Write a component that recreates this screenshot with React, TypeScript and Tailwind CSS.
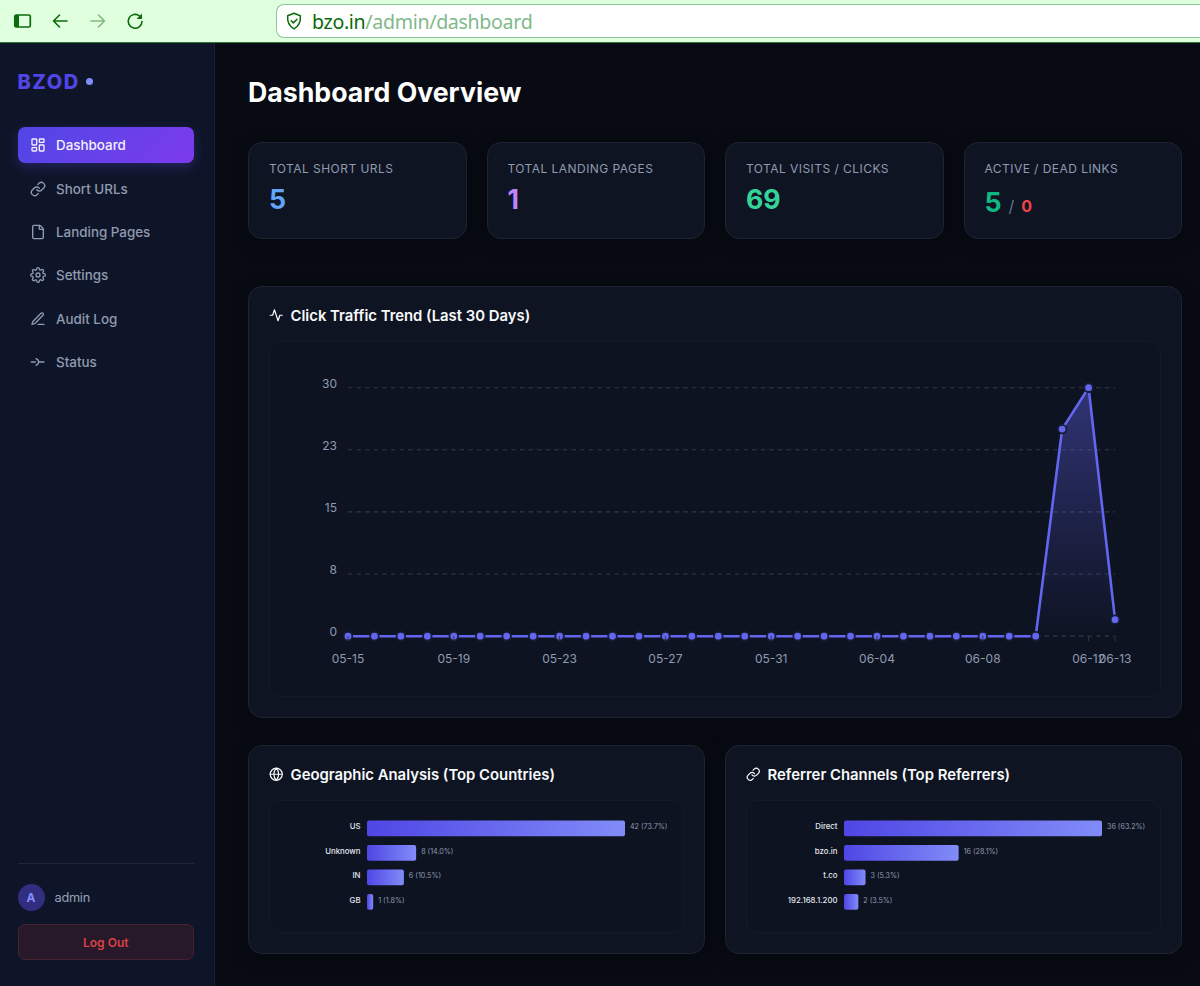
import React from 'react';
import { LayoutDashboard, Link, File } from 'lucide-react';
import { FiActivity, FiEdit3, FiGlobe, FiSettings } from 'react-icons/fi';
import { clsx } from 'clsx';

interface NavItem {
  id: string;
  label: string;
  icon: React.ElementType;
}

interface BarDatum {
  label: string;
  count: number;
  share: string;
}

const StatusIcon: React.FC<{ className?: string }> = ({ className }) => (
  <svg
    viewBox="0 0 24 24"
    fill="none"
    stroke="currentColor"
    strokeWidth="2"
    strokeLinecap="round"
    strokeLinejoin="round"
    className={className}
  >
    <path d="M2 12h6M13 12h8M9 7c2.500 1 4 3 4 5s-1.500 4-4 5" />
  </svg>
);

const navItems: NavItem[] = [
  { id: 'dashboard', label: 'Dashboard', icon: LayoutDashboard },
  { id: 'urls', label: 'Short URLs', icon: Link },
  { id: 'pages', label: 'Landing Pages', icon: File },
  { id: 'settings', label: 'Settings', icon: FiSettings },
  { id: 'audit', label: 'Audit Log', icon: FiEdit3 },
  { id: 'status', label: 'Status', icon: StatusIcon },
];

const countries: BarDatum[] = [
  { label: 'US', count: 42, share: '73.7%' },
  { label: 'Unknown', count: 8, share: '14.0%' },
  { label: 'IN', count: 6, share: '10.5%' },
  { label: 'GB', count: 1, share: '1.8%' },
];

const referrers: BarDatum[] = [
  { label: 'Direct', count: 36, share: '63.2%' },
  { label: 'bzo.in', count: 16, share: '28.1%' },
  { label: 't.co', count: 3, share: '5.3%' },
  { label: '192.168.1.200', count: 2, share: '3.5%' },
];

// 05-15 .. 06-13
const clicks = [...Array(27).fill(0), 25, 30, 2] as number[];
const dateTicks = [
  { day: 0, label: '05-15' },
  { day: 4, label: '05-19' },
  { day: 8, label: '05-23' },
  { day: 12, label: '05-27' },
  { day: 16, label: '05-31' },
  { day: 20, label: '06-04' },
  { day: 24, label: '06-08' },
  { day: 28, label: '06-12' },
  { day: 29, label: '06-13' },
];
const yLabels = ['30', '23', '15', '8', '0'];

const BrowserBar = () => (
  <header className="flex h-[42.5px] shrink-0 border-b border-[#2b7a3c] bg-[#dfffdf] text-[#0a6b0a]">
    <div className="flex w-[276px] shrink-0 items-center pl-[13px]">
      <svg width="20" height="20" viewBox="0 0 20 20" fill="none" stroke="currentColor" strokeWidth="1.700">
        <rect x="1.800" y="4" width="15.500" height="12" rx="1.500" />
        <path d="M2 4h4v12H2z" fill="currentColor" stroke="none" />
      </svg>
      <svg className="ml-[17px]" width="20" height="20" viewBox="0 0 20 20" fill="none" stroke="currentColor" strokeWidth="1.600" strokeLinecap="round" strokeLinejoin="round">
        <path d="M17 10H3.500M9.500 4L3.500 10l6 6" />
      </svg>
      <svg className="ml-[18px] opacity-45" width="20" height="20" viewBox="0 0 20 20" fill="none" stroke="currentColor" strokeWidth="1.600" strokeLinecap="round" strokeLinejoin="round">
        <path d="M3 10h13.500M10.500 4l6 6l-6 6" />
      </svg>
      <svg className="ml-[17px]" width="20" height="20" viewBox="0 0 20 20" fill="none" stroke="currentColor" strokeWidth="1.600" strokeLinecap="round">
        <path d="M17 10.500A6.900 6.900 0 1 1 14.500 5" />
        <path d="M17 2.500v5.500h-5.500z" fill="currentColor" stroke="none" />
      </svg>
    </div>
    <div className="mt-1 flex h-[34px] grow items-center rounded-l-lg border border-r-0 border-[#8cc79a] bg-white pl-2">
      <svg width="18" height="20" viewBox="0 0 18 20" fill="none" stroke="currentColor" strokeWidth="1.500" strokeLinecap="round" strokeLinejoin="round">
        <path d="M9 2.200l6.300 2.500c.6 5.800-1 10.300-6.300 13.100C3.700 15 2.100 10.500 2.700 4.700z" />
        <path d="M6.200 9.800l2.100 2.100L12 8.200" />
      </svg>
      <span className="ml-[9px] pt-px font-['Noto_Sans',sans-serif] text-[19.6px] leading-none tracking-[-0.33px]">
        bzo.in<span className="text-[#7fb98a]">/admin/dashboard</span>
      </span>
    </div>
  </header>
);

const Sidebar = () => (
  <aside className="flex w-[215px] shrink-0 flex-col border-r border-[#1a2131] bg-[#0f1528] pb-[26px] pl-[17.5px] pr-5 pt-[27px]">
    <div className="flex h-6 items-center gap-1.5">
      <span className="text-[20px] font-extrabold leading-6 tracking-[1.5px] text-[#5046e5]">BZOD</span>
      <span className="size-[7px] rounded-full bg-[#818cf8]" />
    </div>
    <nav className="mt-[33.5px] flex flex-col gap-[7px]">
      {navItems.map((item) => {
        const IconComponent = item.icon;
        return (
          <a
            key={item.id}
            href="#"
            className={clsx(
              'flex h-[36.4px] items-center gap-2.5 rounded-[7px] px-[12.5px] text-[13.4px] font-medium',
              item.id === 'dashboard'
                ? 'bg-linear-135 from-[#4f46e5] to-[#7c3aed] text-[#f1f2fb] shadow-[0_4px_11px_rgba(79,70,229,0.3)]'
                : 'text-[#8f9bb0]'
            )}
          >
            <IconComponent className="size-4" />
            {item.label}
          </a>
        );
      })}
    </nav>
    <div className="mt-auto border-t border-[#1e2637] pt-5">
      <div className="flex items-center gap-2.5">
        <span className="flex size-[27px] items-center justify-center rounded-full bg-[#312e81] text-[12px] font-bold text-[#818cf8]">A</span>
        <span className="pt-px text-[12.8px] tracking-[-0.3px] text-[#94a3b8]">admin</span>
      </div>
      <button className="mt-[13px] h-9 w-full rounded-[7px] border border-[#48212f] bg-[#271929] pt-px text-[12px] font-semibold text-[#dc4146]">
        Log Out
      </button>
    </div>
  </aside>
);

const StatCard: React.FC<{ label: string; children: React.ReactNode }> = ({ label, children }) => (
  <div className="h-[97.5px] grow basis-0 rounded-[14px] border border-[#1d2431] bg-[#0f1422] px-5 pt-[17px] shadow-[0_4px_20px_rgba(0,0,0,0.3)]">
    <div className="text-[12px] leading-[18px] tracking-[0.45px] text-[#8f9bb0]">{label}</div>
    {children}
  </div>
);

const Panel: React.FC<{ title: string; icon: React.ElementType; className?: string; children: React.ReactNode }> = ({
  title,
  icon: IconComponent,
  className,
  children,
}) => (
  <section className={clsx('flex flex-col rounded-[14px] border border-[#1d2431] bg-[#0f1422] px-5 pb-5 shadow-[0_4px_20px_rgba(0,0,0,0.3)]', className)}>
    <h2 className="flex h-[54px] shrink-0 items-center gap-[7px] pt-[5px] text-[14.87px] font-semibold text-[#f8fafc]">
      <IconComponent className="size-[14.5px] -translate-y-px" />
      {title}
    </h2>
    <div className="min-h-0 grow overflow-hidden rounded-[11px] border border-[#141a29] bg-[#0e1322]">{children}</div>
  </section>
);

const TrafficChart = () => {
  const left = 78;
  const step = 26.45;
  const base = 294.2;
  const x = (i: number) => left + i * step;
  const y = (v: number) => base - (v * 248.5) / 30;
  const points = clicks.map((v, i) => `${x(i)},${y(v)}`).join(' ');

  return (
    <svg width="890" height="354" viewBox="0 0 890 354" className="block">
      <defs>
        <linearGradient id="area" x1="0" y1="0" x2="0" y2="1">
          <stop offset="0" stopColor="#6366f1" stopOpacity="0.4" />
          <stop offset="1" stopColor="#6366f1" stopOpacity="0" />
        </linearGradient>
      </defs>
      {yLabels.map((label, i) => (
        <g key={label}>
          <line x1={left} x2={845} y1={45.7 + i * 62.1} y2={45.7 + i * 62.1} stroke="#343a49" strokeWidth="1.100" strokeDasharray="4.300 4.300" />
          <text x="67" y={45.9 + i * 62.1} textAnchor="end" fontSize="12" fill="#8f9bb0">{label}</text>
        </g>
      ))}
      <polygon points={`${x(0)},${base} ${points} ${x(29)},${base}`} fill="url(#area)" />
      <polyline points={points} fill="none" stroke="#6366f1" strokeWidth="2.600" strokeLinejoin="round" />
      {clicks.map((v, i) => (
        <circle key={i} cx={x(i)} cy={y(v)} r="4.300" fill="#6366f1" stroke="#171c35" strokeWidth="1.800" />
      ))}
      {dateTicks.map((tick) => (
        <g key={tick.label}>
          <line x1={x(tick.day)} x2={x(tick.day)} y1={base} y2={base + 5} stroke="#303644" />
          <text x={x(tick.day)} y={base + 27} textAnchor="middle" fontSize="12" fill="#8f9bb0">{tick.label}</text>
        </g>
      ))}
    </svg>
  );
};

const BarChart: React.FC<{ id: string; data: BarDatum[] }> = ({ id, data }) => {
  const max = data[0].count;
  return (
    <svg width="413" height="131" viewBox="0 0 413 131" className="block">
      <defs>
        <linearGradient id={id} x1="0" y1="0" x2="1" y2="0">
          <stop offset="0" stopColor="#4f46e5" />
          <stop offset="1" stopColor="#818cf8" />
        </linearGradient>
      </defs>
      {data.map((d, i) => {
        const width = (d.count / max) * 258;
        const top = 19.5 + i * 24.5;
        return (
          <g key={d.label}>
            <text x="90.500" y={top + 8.6} textAnchor="end" fontSize="7.800" fontWeight="500" fill="#e2e8f0">{d.label}</text>
            <rect x="97" y={top} width={width} height="15.700" rx="2" fill={`url(#${id})`} />
            <text x={97 + width + 5} y={top + 8.6} fontSize="7.150" fill="#8f9bb0">{`${d.count} (${d.share})`}</text>
          </g>
        );
      })}
    </svg>
  );
};

const App = () => (
  <div className="flex h-[986px] w-[1200px] flex-col overflow-hidden bg-[#080b13] font-['Inter',sans-serif]">
    <BrowserBar />
    <div className="flex min-h-0 grow">
      <Sidebar />
      <main className="min-w-0 grow pl-[33px] pr-[18px] pt-[33px]">
        <h1 className="text-[26.7px] font-bold leading-8 text-white">Dashboard Overview</h1>
        <div className="mt-[34px] flex gap-5">
          <StatCard label="TOTAL SHORT URLS">
            <div className="mt-1 text-[26.7px] font-bold leading-[34px] text-[#60a5fa]">5</div>
          </StatCard>
          <StatCard label="TOTAL LANDING PAGES">
            <div className="mt-1 text-[26.7px] font-bold leading-[34px] text-[#c084fc]">1</div>
          </StatCard>
          <StatCard label="TOTAL VISITS / CLICKS">
            <div className="mt-1 text-[26.7px] font-bold leading-[34px] text-[#34d399]">69</div>
          </StatCard>
          <StatCard label="ACTIVE / DEAD LINKS">
            <div className="mt-[7px] flex items-baseline gap-[7px] text-[26.7px] font-bold leading-[34px] text-[#10b981]">
              5<span className="text-[16px] font-normal text-[#64748b]">/</span>
              <span className="text-[16px] text-[#ef4444]">0</span>
            </div>
          </StatCard>
        </div>
        <Panel title="Click Traffic Trend (Last 30 Days)" icon={FiActivity} className="mt-[47px] h-[432px]">
          <TrafficChart />
        </Panel>
        <div className="mt-[27px] flex gap-5">
          <Panel title="Geographic Analysis (Top Countries)" icon={FiGlobe} className="h-[209px] grow basis-0">
            <BarChart id="geo" data={countries} />
          </Panel>
          <Panel title="Referrer Channels (Top Referrers)" icon={Link} className="h-[209px] grow basis-0">
            <BarChart id="ref" data={referrers} />
          </Panel>
        </div>
      </main>
    </div>
  </div>
);

export default App;
